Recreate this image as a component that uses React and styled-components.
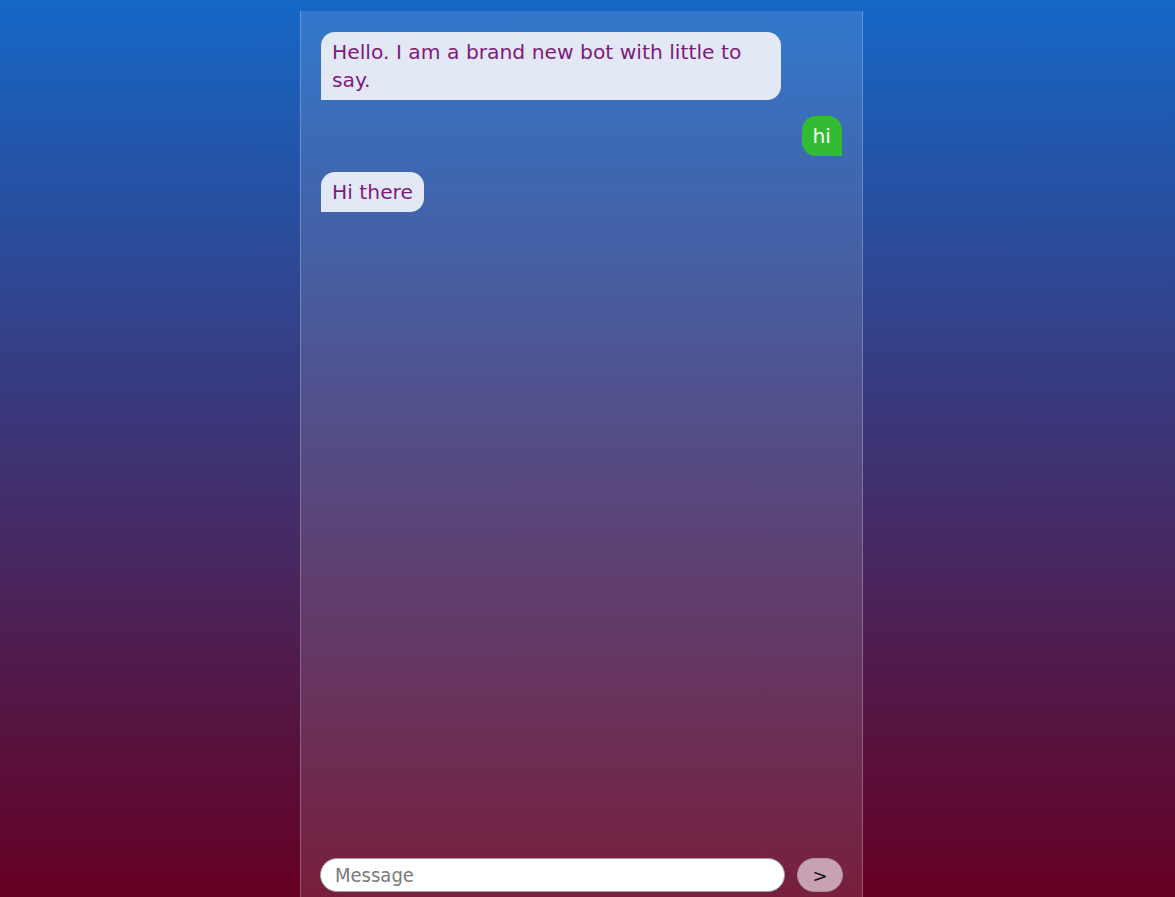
import React, { useState } from 'react';
import styled, { createGlobalStyle } from 'styled-components';

const GlobalStyle = createGlobalStyle`
    html, body {
        margin: 0;
        padding: 0;
        height: 100%;
        overflow: hidden;
    }
    body {
        font-family: "DejaVu Sans", Verdana, sans-serif;
    }
`;

const messages = [
    { from: 'bot', text: 'Hello. I am a brand new bot with little to say.' },
    { from: 'user', text: 'hi' },
    { from: 'bot', text: 'Hi there' },
];

export default function App() {
    const [value, setValue] = useState('');

    return (
        <Page>
            <GlobalStyle />
            <Panel>
                <Messages>
                    {messages.map((m, i) => (
                        <Bubble key={i} mine={m.from === 'user' ? 1 : 0}>
                            {m.text}
                        </Bubble>
                    ))}
                </Messages>
                <Composer>
                    <Input
                        autoFocus
                        placeholder="Message"
                        value={value}
                        onChange={(e) => setValue(e.target.value)}
                    />
                    <Send>{'>'}</Send>
                </Composer>
            </Panel>
        </Page>
    );
}

const Page = styled.div`
    height: 100vh;
    background: linear-gradient(to bottom, #1567c6 0%, #660022 100%);
    display: flex;
    justify-content: center;
    overflow: hidden;
`;

const Panel = styled.div`
    box-sizing: border-box;
    width: 563px;
    height: 897px;
    margin: 11px 12px 0 0;
    padding: 21px 20px 16px 20px;
    background: rgba(255, 255, 255, 0.12);
    border-left: 1px solid rgba(255, 255, 255, 0.25);
    border-right: 1px solid rgba(255, 255, 255, 0.25);
    display: flex;
    flex-direction: column;
    flex-shrink: 0;
`;

const Messages = styled.div`
    flex: 1;
    display: flex;
    flex-direction: column;
    align-items: flex-start;
    gap: 16px;
`;

const Bubble = styled.div`
    box-sizing: border-box;
    max-width: 460px;
    padding: 6px 11px;
    font-size: 20.3px;
    line-height: 28px;
    border-radius: ${(p) => (p.mine ? '14px 14px 0 14px' : '14px 14px 14px 0')};
    background: ${(p) => (p.mine ? '#33bb33' : '#e3e9f4')};
    color: ${(p) => (p.mine ? '#ffffff' : '#7f1a7d')};
    align-self: ${(p) => (p.mine ? 'flex-end' : 'flex-start')};
    width: ${(p) => (p.mine ? 'auto' : '460px')};
    &:last-child {
        width: auto;
    }
`;

const Composer = styled.div`
    display: flex;
    align-items: center;
    gap: 12px;
    margin-left: -1px;
    margin-right: -1px;
`;

const Input = styled.input`
    box-sizing: border-box;
    flex: 1;
    height: 34px;
    padding: 0 14px;
    border: 1px solid #a0a0a8;
    border-radius: 17px;
    background: #fff;
    font-family: "DejaVu Sans Condensed", Tahoma, sans-serif;
    font-size: 20px;
    color: #222;
    outline: none;
    &::placeholder {
        color: #7a7a7a;
    }
`;

const Send = styled.button`
    box-sizing: border-box;
    width: 46px;
    height: 34px;
    border: 1px solid #a7909a;
    border-radius: 17px;
    background: #c8a2b2;
    color: #111;
    font-family: "DejaVu Sans", Verdana, sans-serif;
    font-size: 18px;
    padding: 0;
`;
